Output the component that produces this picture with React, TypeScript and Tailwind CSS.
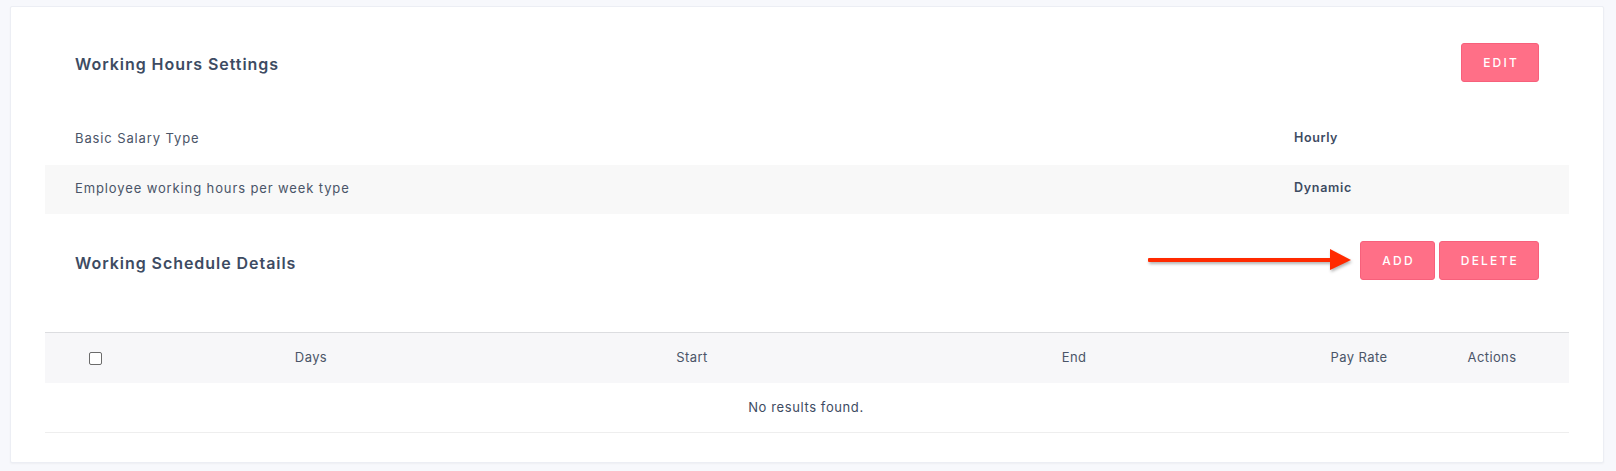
import React from "react";

const font = { fontFamily: "Inter, 'Noto Sans', sans-serif" };

function Btn({ children }: { children: React.ReactNode }) {
  return (
    <button className="h-[39px] pl-[21px] pr-[19px] rounded-[3px] border border-[#f7607b] bg-[#ff6f87] text-white text-[12px] font-medium tracking-[2.2px] leading-none">
      {children}
    </button>
  );
}

export default function App() {
  return (
    <div className="min-h-[471px] w-full bg-[#f7f8fc] pt-[6px] pl-[10px] pr-[12px] pb-[8px]" style={font}>
      <div className="bg-white border border-[#eceef4] rounded-[2px] px-[34px] pb-[29px] shadow-[0_1px_2px_rgba(0,0,0,0.04)]">
        {/* Working Hours Settings header */}
        <div className="flex items-center justify-between pt-[36px] pl-[30px] pr-[30px]">
          <h2 className="text-[16px] font-semibold text-[#3d4b62] tracking-[0.95px] mt-[3px]">Working Hours Settings</h2>
          <Btn>EDIT</Btn>
        </div>

        <div className="mt-[34px]">
          <div className="h-[49px] flex items-center pl-[30px] text-[13px] text-[#4a5568] tracking-[0.88px]">
            <div className="w-[1219px] -mt-[4px]">Basic Salary Type</div>
            <div className="-mt-[4px] font-semibold text-[12.5px] text-[#3d4b62] tracking-[0.6px]">Hourly</div>
          </div>
          <div className="h-[49px] flex items-center pl-[30px] bg-[#f8f8f8] text-[13px] text-[#4a5568] tracking-[0.88px]">
            <div className="w-[1219px] -mt-[2px]">Employee working hours per week type</div>
            <div className="-mt-[2px] font-semibold text-[12.5px] text-[#3d4b62] tracking-[0.7px]">Dynamic</div>
          </div>
        </div>

        {/* Working Schedule Details header */}
        <div className="relative flex items-center justify-between pt-[27px] pl-[30px] pr-[30px]">
          <h2 className="text-[16px] font-semibold text-[#3d4b62] tracking-[0.95px] mt-[4px]">Working Schedule Details</h2>
          <div className="flex gap-[4px]">
            <Btn>ADD</Btn>
            <Btn>DELETE</Btn>
          </div>
          <svg
            className="absolute left-[1103px] top-[35px] drop-shadow-[1px_2px_1.5px_rgba(0,0,0,0.3)]"
            width="204"
            height="22"
            viewBox="0 0 204 22"
          >
            <rect x="0" y="9" width="186" height="4" fill="#ff2a00" rx="1" />
            <polygon points="182,0 203,11 182,21" fill="#ff2a00" />
          </svg>
        </div>

        {/* Table */}
        <div className="mt-[52px]">
          <div className="grid grid-cols-[99px_334px_428px_336px_173px_154px] h-[51px] items-center border-t border-[#dcdde0] bg-[#f7f7f9] text-[13px] text-[#4a5568] tracking-[0.4px]">
            <div className="flex justify-center pl-[1px]">
              <span className="block w-[13px] h-[13px] rounded-[2px] border border-[#6b6b6b] bg-white" />
            </div>
            <div className="text-center">Days</div>
            <div className="text-center">Start</div>
            <div className="text-center">End</div>
            <div className="text-center pl-[61px]">Pay Rate</div>
            <div className="text-center">Actions</div>
          </div>
          <div className="h-[50px] flex items-center justify-center border-b border-[#eeeeee] text-[13px] text-[#3d4b62] tracking-[0.6px]">
            <span className="pr-[2px]">No results found.</span>
          </div>
        </div>
      </div>
    </div>
  );
}
